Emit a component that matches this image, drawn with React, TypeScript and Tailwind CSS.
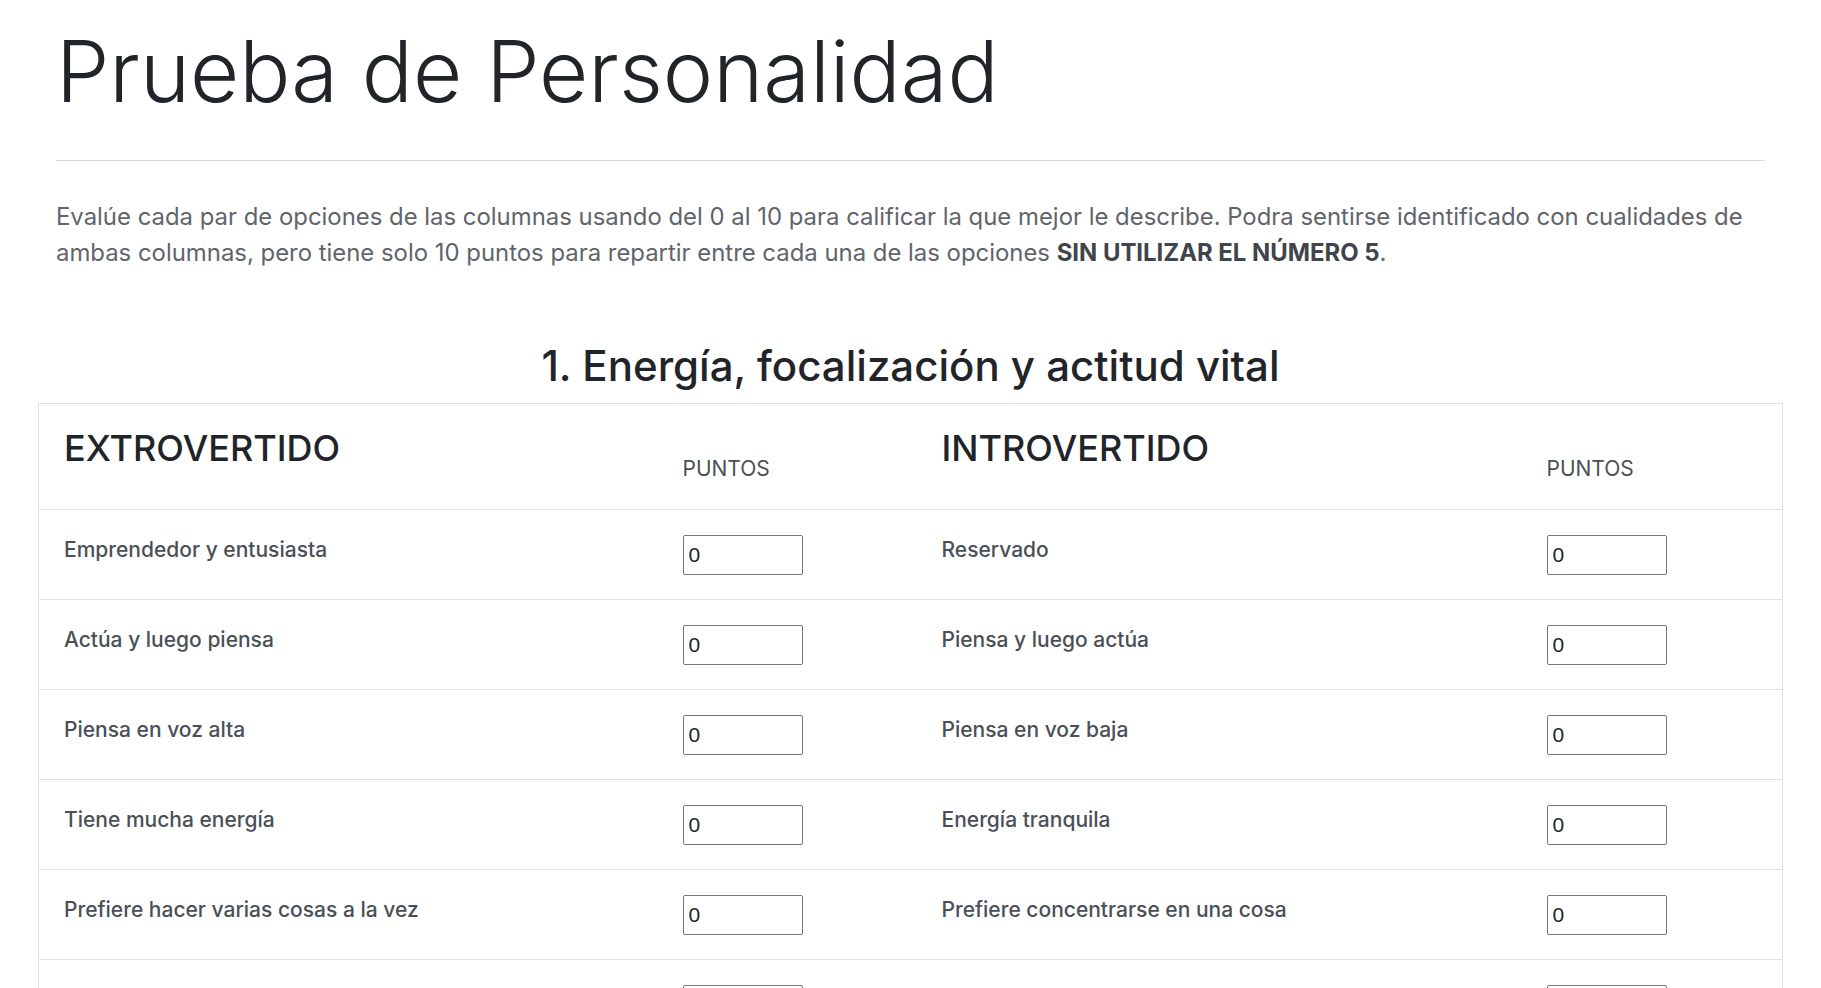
import React from 'react';

const rows: [string, string][] = [
  ["Emprendedor y entusiasta", "Reservado"],
  ["Actúa y luego piensa", "Piensa y luego actúa"],
  ["Piensa en voz alta", "Piensa en voz baja"],
  ["Tiene mucha energía", "Energía tranquila"],
  ["Prefiere hacer varias cosas a la vez", "Prefiere concentrarse en una cosa"],
  ["Le gusta estar con gente", "Prefiere estar solo"],
];

const PointsInput: React.FC = () => (
  <input
    type="text"
    defaultValue="0"
    className="block w-[120px] h-[40px] border border-[#767676] rounded-[2px] px-[5px] text-[21px] text-[#212529] font-['Liberation_Sans',Arial,sans-serif] outline-none"
  />
);

const App: React.FC = () => {
  return (
    <div className="min-h-screen bg-white font-['Inter',sans-serif] text-[#212529] px-[38px]">
      <div className="px-[18px]">
        {/* Título */}
        <h1 className="pt-[21px] text-[85px] leading-[1.2] font-light">Prueba de Personalidad</h1>
        <hr className="mt-[37px] border-0 border-t border-[#d9dadb]" />
        <p className="mt-[38px] text-[23.9px] leading-[36px] text-[#5f656b]">
          Evalúe cada par de opciones de las columnas usando del 0 al 10 para calificar la que mejor le describe. Podra sentirse identificado con cualidades de ambas columnas, pero tiene solo 10 puntos para repartir entre cada una de las opciones{' '}
          <strong className="font-bold text-[#3f454b]">SIN UTILIZAR EL NÚMERO 5</strong>.
        </p>
      </div>

      <h2 className="mt-[70px] mb-[12px] text-center text-[42px] leading-[1.2] font-medium">1. Energía, focalización y actitud vital</h2>

      <table className="table-fixed w-[1744px] border border-[#dee2e6] border-collapse">
        <colgroup>
          <col className="w-[619px]" />
          <col className="w-[259px]" />
          <col className="w-[605px]" />
          <col className="w-[261px]" />
        </colgroup>
        <thead>
          <tr className="border-b border-[#dee2e6]">
            <th className="align-top text-left px-[25px] pt-[23px] pb-[24px] font-normal">
              <div className="mb-[14px] text-[36px] leading-[1.2] font-medium">EXTROVERTIDO</div>
            </th>
            <th className="align-bottom text-left px-[25px] pb-[24px] text-[21px] leading-[1.5] font-normal text-[#495057]">PUNTOS</th>
            <th className="align-top text-left px-[25px] pt-[23px] pb-[24px] font-normal">
              <div className="mb-[14px] text-[36px] leading-[1.2] font-medium">INTROVERTIDO</div>
            </th>
            <th className="align-bottom text-left px-[25px] pb-[24px] text-[21px] leading-[1.5] font-normal text-[#495057]">PUNTOS</th>
          </tr>
        </thead>
        <tbody>
          {rows.map(([a, b], i) => (
            <tr key={i} className="border-b border-[#dee2e6]">
              <td className="align-top px-[25px] pt-[25px] pb-[24px] text-[21px] leading-[30px] font-medium text-[#495057]">{a}</td>
              <td className="align-top px-[25px] pt-[25px] pb-[24px]"><PointsInput /></td>
              <td className="align-top px-[25px] pt-[25px] pb-[24px] text-[21px] leading-[30px] font-medium text-[#495057]">{b}</td>
              <td className="align-top px-[25px] pt-[25px] pb-[24px]"><PointsInput /></td>
            </tr>
          ))}
        </tbody>
      </table>
    </div>
  );
};

export default App;
